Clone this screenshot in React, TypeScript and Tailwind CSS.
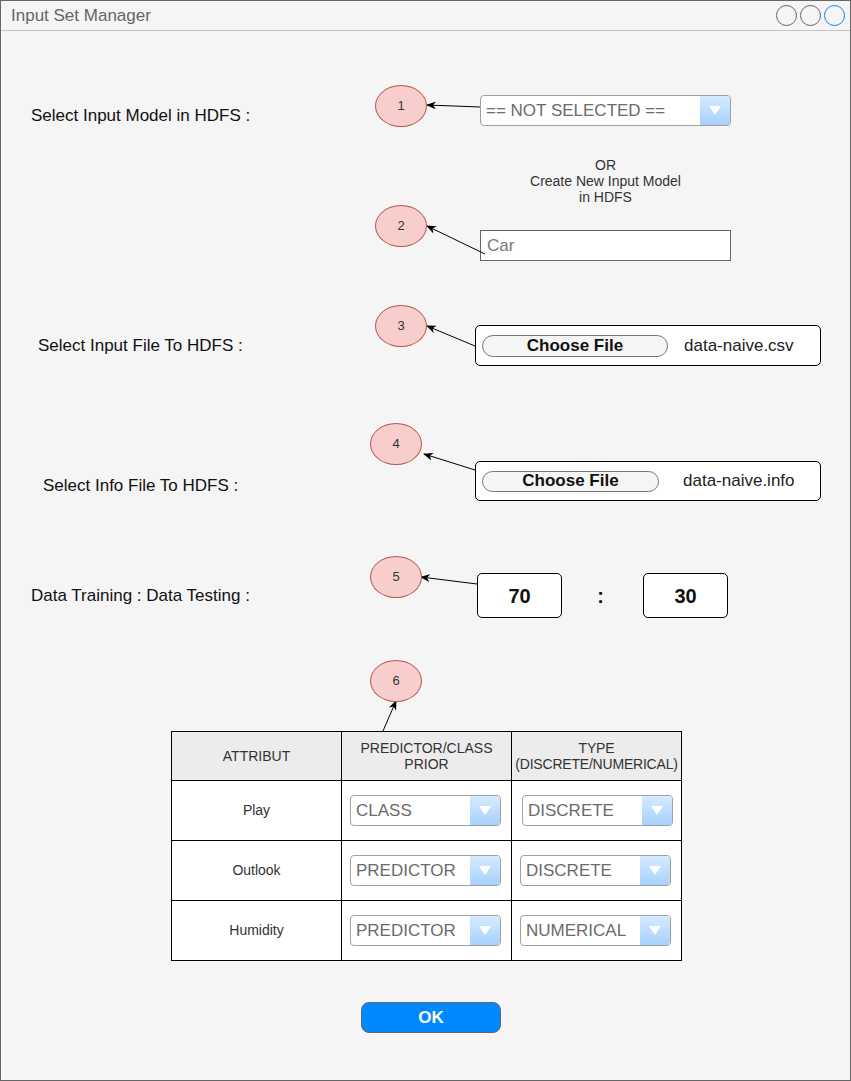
import React from "react";

const font = { fontFamily: '"Liberation Sans", Arial, sans-serif' };

function Combo({ label, w, h }: { label: string; w: string; h: string }) {
  return (
    <div
      className={`flex ${w} ${h} rounded-[4px] border border-[#a0a0a0] bg-white overflow-hidden`}
    >
      <div className="flex-1 flex items-center pl-[5px] text-[17px] text-[#6b6b6b] whitespace-nowrap">
        {label}
      </div>
      <div className="w-[30px] shrink-0 h-full flex items-center justify-center bg-gradient-to-b from-[#d6ebff] to-[#a6d1fd]">
        <svg width="14" height="11" viewBox="0 0 14 11">
          <path d="M1 1 L13 1 L7 10 Z" fill="white" />
        </svg>
      </div>
    </div>
  );
}

function FileBox({ btnW, btnH, gap, name }: { btnW: string; btnH: string; gap: string; name: string }) {
  return (
    <div className="flex items-center w-[346px] h-full rounded-[5px] border border-black bg-white pl-[6px]">
      <div
        className={`${btnW} ${btnH} rounded-full border border-[#777] bg-[#f5f5f5] flex items-center justify-center text-[17px] font-bold text-[#111]`}
      >
        Choose File
      </div>
      <div className={`${gap} text-[17px] text-[#222]`}>{name}</div>
    </div>
  );
}

const marks = [
  { n: "1", x: 374, y: 84 },
  { n: "2", x: 374, y: 204 },
  { n: "3", x: 374, y: 304 },
  { n: "4", x: 369, y: 422 },
  { n: "5", x: 369, y: 555 },
  { n: "6", x: 369, y: 659 },
];

const arrows = [
  [480, 107, 427, 105],
  [485, 254, 427, 226],
  [475, 346, 427, 326],
  [475, 470, 424, 454],
  [477, 584, 421, 577],
  [383, 731, 396, 701],
];

const rows = [
  { name: "Play", a: "CLASS", b: "DISCRETE", aMl: "ml-[8px]", bMl: "ml-[10px]" },
  { name: "Outlook", a: "PREDICTOR", b: "DISCRETE", aMl: "ml-[8px]", bMl: "ml-[8px]" },
  { name: "Humidity", a: "PREDICTOR", b: "NUMERICAL", aMl: "ml-[8px]", bMl: "ml-[8px]" },
];

export default function App() {
  return (
    <div style={font} className="relative w-[851px] h-[1081px] border border-[#666] bg-[#f5f5f5] text-[#111]">
      {/* title bar */}
      <div className="h-[30px] border-b border-[#c4c4c4] flex items-center justify-between pl-[10px] pr-[5px]">
        <span className="text-[17px] text-[#666]">Input Set Manager</span>
        <div className="flex gap-[3px]">
          <div className="w-[21px] h-[21px] rounded-full border border-[#666]" />
          <div className="w-[21px] h-[21px] rounded-full border border-[#666]" />
          <div className="w-[21px] h-[21px] rounded-full border border-[#0a84ff]" />
        </div>
      </div>

      {/* model select */}
      <div className="mt-[64px] flex h-[31px]">
        <div className="w-[479px] shrink-0 pl-[30px] pt-[11px] text-[17px] leading-[19px]">
          Select Input Model in HDFS :
        </div>
        <Combo label="== NOT SELECTED ==" w="w-[251px]" h="h-[31px]" />
      </div>

      <div className="mt-[31px] ml-[479px] w-[251px] text-center text-[14px] leading-[16px] text-[#333]">
        OR
        <br />
        Create New Input Model
        <br />
        in HDFS
      </div>

      <div className="mt-[25px] ml-[479px] w-[251px] h-[31px] border border-[#666] bg-white flex items-center pl-[6px] text-[17px] text-[#777]">
        Car
      </div>

      {/* input file */}
      <div className="mt-[64px] flex h-[41px]">
        <div className="w-[474px] shrink-0 pl-[37px] pt-[11px] text-[17px] leading-[19px]">
          Select Input File To HDFS :
        </div>
        <FileBox btnW="w-[186px]" btnH="h-[22px]" gap="ml-[16px]" name="data-naive.csv" />
      </div>

      {/* info file */}
      <div className="mt-[95px] flex h-[40px]">
        <div className="w-[474px] shrink-0 pl-[42px] pt-[15px] text-[17px] leading-[19px]">
          Select Info File To HDFS :
        </div>
        <FileBox btnW="w-[177px]" btnH="h-[21px]" gap="ml-[24px]" name="data-naive.info" />
      </div>

      {/* ratio */}
      <div className="mt-[72px] flex h-[45px]">
        <div className="w-[476px] shrink-0 pl-[30px] pt-[13px] text-[17px] leading-[19px]">
          Data Training : Data Testing :
        </div>
        <div className="w-[85px] h-[45px] rounded-[5px] border border-black bg-white flex items-center justify-center text-[20px] font-bold">
          70
        </div>
        <div className="w-[81px] flex items-center justify-center pr-[4px] text-[20px] font-bold">:</div>
        <div className="w-[85px] h-[45px] rounded-[5px] border border-black bg-white flex items-center justify-center text-[20px] font-bold">
          30
        </div>
      </div>

      {/* attribute table */}
      <table className="mt-[113px] ml-[170px] border-collapse text-[14px] text-[#333]">
        <thead>
          <tr className="h-[49px] bg-[#ececec]">
            <th className="w-[170px] border border-black font-normal leading-[16px]">ATTRIBUT</th>
            <th className="w-[170px] border border-black font-normal leading-[16px]">
              PREDICTOR/CLASS
              <br />
              PRIOR
            </th>
            <th className="w-[170px] border border-black font-normal leading-[16px] tracking-[-0.2px] whitespace-nowrap">
              TYPE
              <br />
              (DISCRETE/NUMERICAL)
            </th>
          </tr>
        </thead>
        <tbody>
          {rows.map((r) => (
            <tr key={r.name} className="h-[60px] bg-white">
              <td className="border border-black text-center">{r.name}</td>
              <td className="border border-black">
                <div className={r.aMl}>
                  <Combo label={r.a} w="w-[151px]" h="h-[31px]" />
                </div>
              </td>
              <td className="border border-black">
                <div className={r.bMl}>
                  <Combo label={r.b} w="w-[151px]" h="h-[31px]" />
                </div>
              </td>
            </tr>
          ))}
        </tbody>
      </table>

      <div className="mt-[41px] ml-[360px] w-[140px] h-[31px] rounded-[8px] border border-[#666] bg-[#0089ff] flex items-center justify-center text-[17px] font-bold text-white">
        OK
      </div>

      {/* annotations */}
      <svg className="absolute -left-px -top-px pointer-events-none" width="851" height="1081">
        <defs>
          <marker id="ah" markerWidth="10" markerHeight="8" refX="9" refY="4" orient="auto" markerUnits="userSpaceOnUse">
            <path d="M0 0 L10 4 L0 8 L3 4 Z" fill="#000" />
          </marker>
        </defs>
        {arrows.map(([x1, y1, x2, y2], i) => (
          <line key={i} x1={x1} y1={y1} x2={x2} y2={y2} stroke="#000" strokeWidth="1" markerEnd="url(#ah)" />
        ))}
      </svg>
      {marks.map((m) => (
        <div
          key={m.n}
          style={{ left: m.x, top: m.y }}
          className="absolute w-[52px] h-[42px] rounded-[50%] border border-[#b85450] bg-[#f8cecc] flex items-center justify-center text-[13px] text-[#333]"
        >
          {m.n}
        </div>
      ))}
    </div>
  );
}
